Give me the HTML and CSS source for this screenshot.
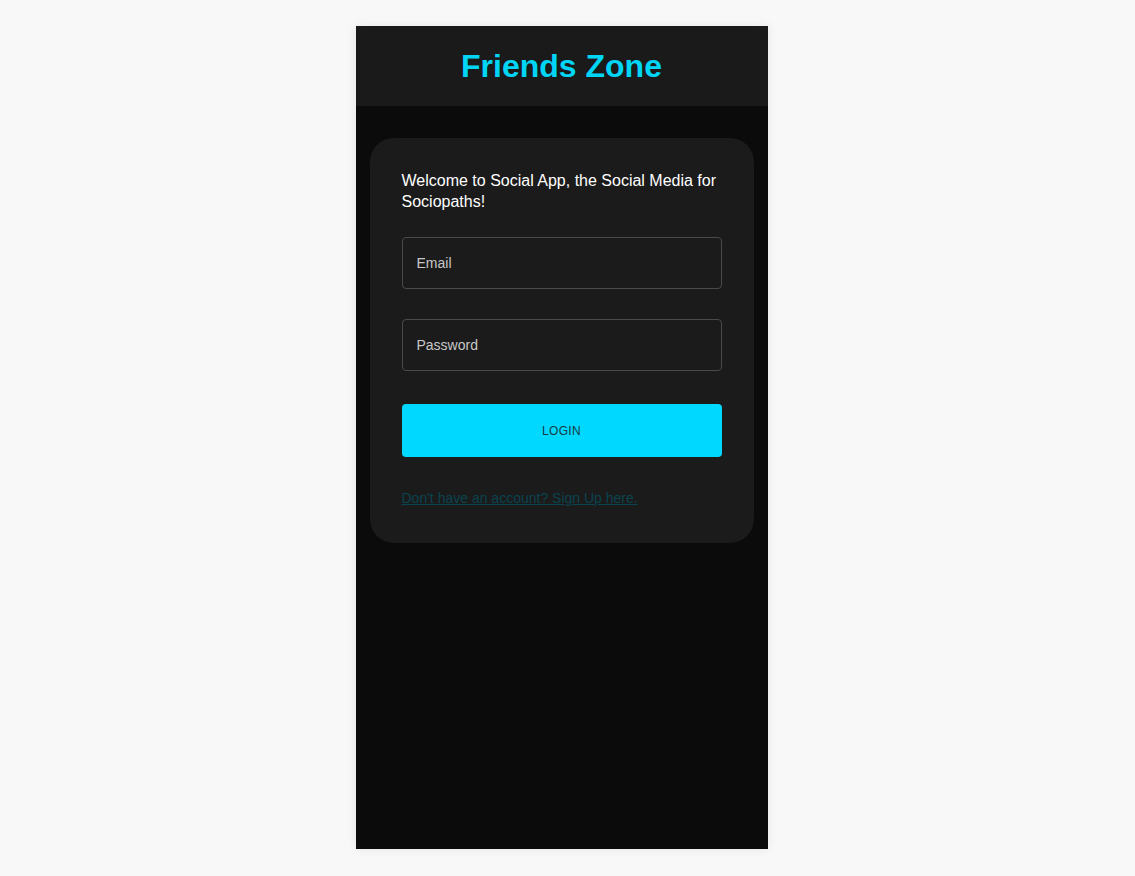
FILE: index.html
```html
<!DOCTYPE html>
<html lang="en">
<head>
    <meta charset="UTF-8">
    <meta name="viewport" content="width=device-width, initial-scale=1.0">
    <title>Friends Zone</title>
    <link rel="stylesheet" href="styles.css">
</head>
<body>

    <div id="app">
        <header class="top-bar">
            <h1>Friends Zone</h1>
        </header>

        <main class="content">
            <div class="login-card">
                <p class="welcome">Welcome to Social App, the Social Media for Sociopaths!</p>
                <input type="text" class="field" placeholder="Email">
                <input type="password" class="field" placeholder="Password">
                <button class="login-btn">LOGIN</button>
                <a href="#" class="signup-link">Don't have an account? Sign Up here.</a>
            </div>
        </main>
    </div>

</body>
</html>
```

FILE: styles.css
```css
body {
    font-family: "Liberation Sans", Arial, sans-serif;
    background-color: #f8f8f8;
    margin: 0;
    padding: 26px 12px 27px 0;
}
#app {
    width: 412px;
    height: 823px;
    margin: 0 auto;
    background: #0b0b0b;
    display: flex;
    flex-direction: column;
    box-shadow: 0 0 10px rgba(0, 0, 0, 0.08);
}
.top-bar {
    height: 80px;
    background: #1a1a1a;
    display: flex;
    align-items: center;
    justify-content: center;
}
.top-bar h1 {
    margin: 0;
    font-size: 32px;
    font-weight: bold;
    color: #00d5f5;
}
.content {
    padding: 32px 14px;
}
.login-card {
    background: #1b1b1b;
    border-radius: 24px;
    padding: 32px 32px 37px;
    display: flex;
    flex-direction: column;
}
.welcome {
    margin: 0 0 25px;
    color: white;
    font-size: 16px;
    line-height: 21px;
}
.field {
    height: 52px;
    box-sizing: border-box;
    padding: 0 14px;
    margin-bottom: 30px;
    background: #1b1b1b;
    border: 1px solid #4a4a4a;
    border-radius: 4px;
    font-family: inherit;
    font-size: 14px;
    color: #ddd;
}
.field::placeholder {
    color: #c8c8c8;
}
.field + .login-btn {
    margin-top: 3px;
}
.login-btn {
    height: 53px;
    background: #00d8ff;
    border: none;
    border-radius: 4px;
    font-family: inherit;
    font-size: 12px;
    color: #1a3a44;
    cursor: pointer;
    letter-spacing: 0.3px;
}
.signup-link {
    margin-top: 33px;
    font-size: 14px;
    line-height: 16px;
    color: #0a4450;
    align-self: flex-start;
}
```
